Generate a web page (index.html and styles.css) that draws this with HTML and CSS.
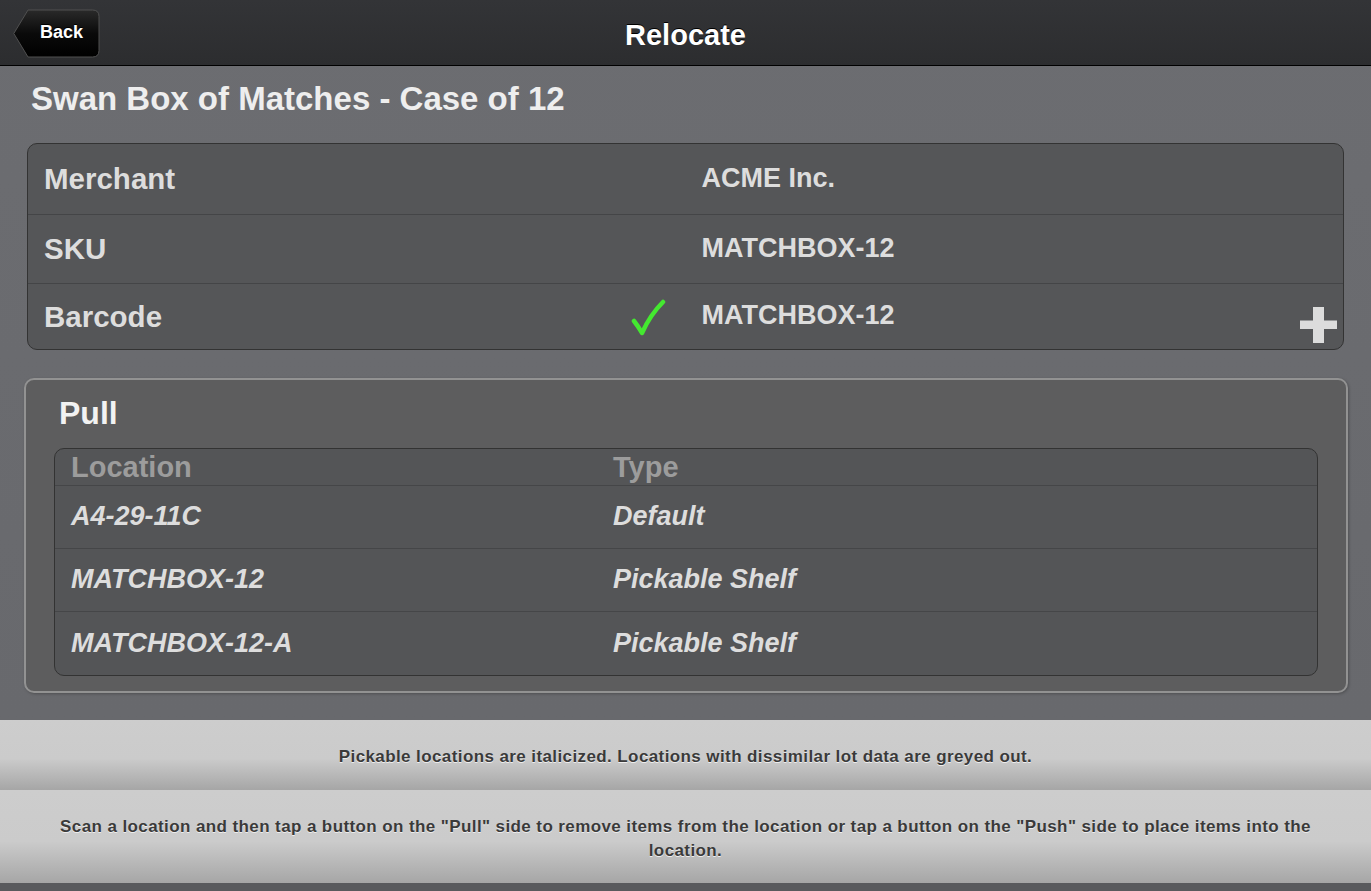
FILE: index.html
```html
<!DOCTYPE html>
<html>
<head>
<meta charset="utf-8">
<title>Relocate</title>
<link rel="stylesheet" href="styles.css">
</head>
<body>
<div class="page">
  <header class="topbar">
    <a class="back" href="#">
      <svg class="back-shape" width="87" height="49" viewBox="0 0 87 49">
        <defs>
          <linearGradient id="bg" x1="0" y1="0" x2="0" y2="1">
            <stop offset="0" stop-color="#2a2a2a"/>
            <stop offset="0.5" stop-color="#0a0a0a"/>
            <stop offset="1" stop-color="#000"/>
          </linearGradient>
        </defs>
        <path d="M0.8 24.5 L15 1 H79.5 Q86 1 86 7.5 V41.5 Q86 48 79.5 48 H15 Z" fill="url(#bg)" stroke="#505050" stroke-width="1"/>
      </svg>
      <span class="back-label">Back</span>
    </a>
    <h1 class="title">Relocate</h1>
    <div class="spacer"></div>
  </header>

  <main class="content">
    <h2 class="item-title">Swan Box of Matches - Case of 12</h2>

    <div class="info">
      <div class="info-row r1">
        <div class="cell label">Merchant</div>
        <div class="cell value">ACME Inc.</div>
      </div>
      <div class="info-row r2">
        <div class="cell label">SKU</div>
        <div class="cell value">MATCHBOX-12</div>
      </div>
      <div class="info-row r3">
        <div class="cell label">Barcode
          <svg class="check" width="36" height="38" viewBox="0 0 36 38">
            <path d="M4 22 Q8 27 12 34 Q20 16 33 3" fill="none" stroke="#44e830" stroke-width="4.5" stroke-linecap="round" stroke-linejoin="round"/>
          </svg>
        </div>
        <div class="cell value">MATCHBOX-12</div>
      </div>
      <svg class="plus" width="37" height="36" viewBox="0 0 37 36">
        <rect x="0" y="13.5" width="37" height="8.5" fill="#dcdcdc"/>
        <rect x="13" y="0" width="11" height="36" fill="#dcdcdc"/>
      </svg>
    </div>

    <section class="pull">
      <h3 class="pull-title">Pull</h3>
      <div class="loc-table">
        <div class="loc-row head">
          <div class="loc-cell">Location</div>
          <div class="loc-cell">Type</div>
        </div>
        <div class="loc-row">
          <div class="loc-cell">A4-29-11C</div>
          <div class="loc-cell">Default</div>
        </div>
        <div class="loc-row">
          <div class="loc-cell">MATCHBOX-12</div>
          <div class="loc-cell">Pickable Shelf</div>
        </div>
        <div class="loc-row last">
          <div class="loc-cell">MATCHBOX-12-A</div>
          <div class="loc-cell">Pickable Shelf</div>
        </div>
      </div>
    </section>
  </main>

  <footer class="footer">
    <div class="note note-1">Pickable locations are italicized. Locations with dissimilar lot data are greyed out.</div>
    <div class="note note-2">Scan a location and then tap a button on the "Pull" side to remove items from the location or tap a button on the "Push" side to place items into the location.</div>
  </footer>
</div>
</body>
</html>
```

FILE: styles.css
```css
* { box-sizing: border-box; }

html, body {
  margin: 0;
  padding: 0;
}

body {
  font-family: "Liberation Sans", Arial, sans-serif;
  background: #6a6b6f;
  color: #ddd;
}

.page {
  height: 891px;
  display: flex;
  flex-direction: column;
  background: linear-gradient(#6c6d71, #67686c);
}

/* Header */
.topbar {
  height: 66px;
  background: linear-gradient(#333437, #2c2d2f);
  border-bottom: 1px solid #000;
  display: grid;
  grid-template-columns: 1fr auto 1fr;
  align-items: start;
}

.back {
  position: relative;
  width: 87px;
  height: 49px;
  margin: 9px 0 0 13px;
  display: flex;
  align-items: center;
  text-decoration: none;
}

.back-shape {
  position: absolute;
  left: 0;
  top: 0;
}

.back-label {
  position: relative;
  margin-left: 27px;
  margin-bottom: 3px;
  font-size: 18px;
  font-weight: bold;
  color: #fff;
  text-shadow: 0 -1px 0 #000;
}

.title {
  margin: 0;
  font-size: 29px;
  font-weight: bold;
  color: #fff;
  line-height: 66px;
  text-shadow: 0 -1px 0 #000;
  padding-top: 2px;
}

/* Content */
.content {
  display: flex;
  flex-direction: column;
}

.item-title {
  margin: 14px 0 0 31px;
  font-size: 33px;
  line-height: 38px;
  font-weight: bold;
  color: #eeeeee;
}

.info {
  position: relative;
  margin: 25px 27px 0 27px;
  border: 1px solid #333;
  border-radius: 10px;
  background: #555658;
}

.info-row {
  display: grid;
  grid-template-columns: 1fr 1fr;
  border-bottom: 1px solid #444547;
}

.info-row.r1 { height: 71px; }
.info-row.r2 { height: 69px; }
.info-row.r3 { height: 65px; border-bottom: none; }

.cell {
  display: flex;
  align-items: center;
  padding: 0 16px;
  font-weight: bold;
  color: #dddddd;
}

.cell.label {
  font-size: 29.5px;
  justify-content: space-between;
  padding-right: 20px;
}

.cell.value {
  font-size: 27px;
  padding-bottom: 2px;
}

.check {
  margin-top: 2px;
}

.plus {
  position: absolute;
  right: 6px;
  bottom: 6px;
}

/* Pull */
.pull {
  margin: 28px 23px 0 24px;
  border: 2px solid #929292;
  border-radius: 10px;
  background: #5d5d5e;
  padding: 0 28px 15px 28px;
  box-shadow: 1px 1px 3px rgba(0,0,0,0.25);
}

.pull-title {
  margin: 15px 0 16px 5px;
  font-size: 32px;
  line-height: 37px;
  font-weight: bold;
  color: #f2f2f2;
}

.loc-table {
  border: 1px solid #333;
  border-radius: 10px;
  background: #545557;
}

.loc-row {
  display: grid;
  grid-template-columns: 542px 1fr;
  height: 63px;
  border-bottom: 1px solid #454648;
  align-items: center;
}

.loc-row.head {
  height: 37px;
}

.loc-row.last {
  border-bottom: none;
}

.loc-cell {
  padding-left: 16px;
  font-size: 27px;
  font-weight: bold;
  font-style: italic;
  color: #dddddd;
}

.loc-row.head .loc-cell {
  font-style: normal;
  font-size: 29px;
  color: #9c9c9c;
}

.loc-row:not(.head) .loc-cell {
  padding-bottom: 1px;
}

/* Footer */
.footer {
  margin-top: auto;
  padding-bottom: 8px;
  background: #595a5d;
}

.note {
  text-align: center;
  font-size: 17px;
  letter-spacing: 0.4px;
  font-weight: bold;
  color: #3a3a3a;
  text-shadow: 0 1px 0 #eee;
  background: linear-gradient(#cdcdcd 0%, #cbcbcb 55%, #a6a6a6 100%);
  display: flex;
  align-items: center;
  justify-content: center;
}

.note-1 {
  height: 70px;
  padding: 4px 30px 0;
}

.note-2 {
  height: 93px;
  line-height: 24px;
  padding: 4px 30px 0;
}
```
